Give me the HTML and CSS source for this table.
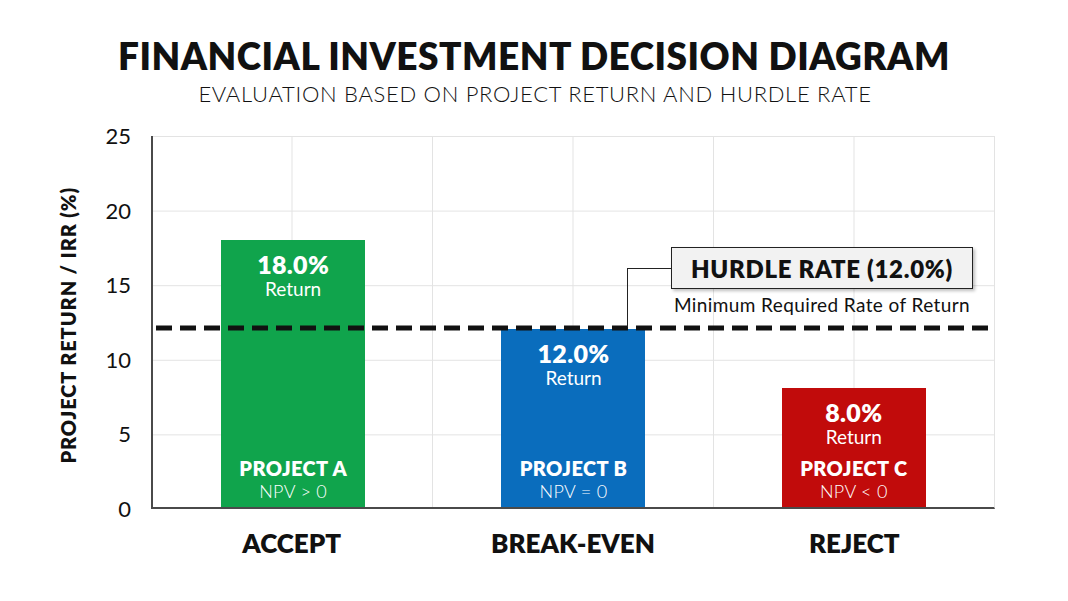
FILE: index.html
```html
<!DOCTYPE html>
<html lang="en">
<head>
<meta charset="utf-8">
<title>Financial Investment Decision Diagram</title>
<link rel="stylesheet" href="styles.css">
</head>
<body>
<header class="header">
  <h1 class="title">FINANCIAL INVESTMENT DECISION DIAGRAM</h1>
  <p class="subtitle">EVALUATION BASED ON PROJECT RETURN AND HURDLE RATE</p>
</header>
<main class="chart">
  <div class="y-title"><span>PROJECT RETURN / IRR (%)</span></div>
  <div class="y-ticks">
    <span>25</span><span>20</span><span>15</span><span>10</span><span>5</span><span>0</span>
  </div>
  <div class="plot">
    <div class="bars">
      <div class="slot">
        <div class="bar bar-green" style="height:72%">
          <div class="bar-top"><span class="value">18.0%</span><span class="value-sub">Return</span></div>
          <div class="bar-bottom"><span class="project">PROJECT A</span><span class="npv">NPV &gt; 0</span></div>
        </div>
      </div>
      <div class="slot">
        <div class="bar bar-blue" style="height:48%">
          <div class="bar-top"><span class="value">12.0%</span><span class="value-sub">Return</span></div>
          <div class="bar-bottom"><span class="project">PROJECT B</span><span class="npv">NPV = 0</span></div>
        </div>
      </div>
      <div class="slot">
        <div class="bar bar-red" style="height:32%">
          <div class="bar-top"><span class="value">8.0%</span><span class="value-sub">Return</span></div>
          <div class="bar-bottom"><span class="project">PROJECT C</span><span class="npv">NPV &lt; 0</span></div>
        </div>
      </div>
    </div>
    <div class="hurdle-line" style="bottom:48.3%"></div>
    <div class="connector"></div>
    <div class="hurdle-label">
      <div class="hurdle-box">HURDLE RATE (12.0%)</div>
      <div class="hurdle-caption">Minimum Required Rate of Return</div>
    </div>
  </div>
  <div class="x-labels">
    <span>ACCEPT</span><span>BREAK-EVEN</span><span>REJECT</span>
  </div>
</main>
</body>
</html>
```
FILE: styles.css
```css
* { box-sizing: border-box; }
html, body { margin: 0; padding: 0; }
body {
  width: 1068px;
  height: 601px;
  background: #ffffff;
  color: #111111;
  font-family: "Lato", "Open Sans", "DejaVu Sans", sans-serif;
  overflow: hidden;
}
.header {
  padding-top: 36px;
  text-align: center;
}
.title {
  margin: 0;
  font-size: 37px;
  line-height: 40px;
  font-weight: 800;
  letter-spacing: 0.5px;
  padding-left: 0;
}
.subtitle {
  margin: 5px 0 0;
  font-size: 22px;
  line-height: 26px;
  font-weight: 300;
  letter-spacing: 0.7px;
  padding-left: 2px;
}
.chart {
  margin-top: 29px;
  margin-left: 48px;
  display: grid;
  grid-template-columns: 40px 63px 844px;
  grid-template-rows: 373px auto;
}
.y-title {
  grid-row: 1;
  grid-column: 1;
  display: flex;
  align-items: center;
  justify-content: center;
  padding-top: 6px;
}
.y-title span {
  writing-mode: vertical-rl;
  transform: rotate(180deg);
  font-size: 20px;
  font-weight: 800;
  letter-spacing: 0.9px;
  white-space: nowrap;
}
.y-ticks {
  grid-row: 1;
  grid-column: 2;
  display: flex;
  flex-direction: column;
  justify-content: space-between;
  align-items: flex-end;
  padding-right: 20px;
  margin: -12px 0;
}
.y-ticks span {
  font-size: 22px;
  line-height: 24px;
  font-weight: 400;
}
.plot {
  grid-row: 1;
  grid-column: 3;
  position: relative;
  border-left: 2px solid #4a4a4a;
  border-bottom: 2px solid #4a4a4a;
  border-right: 1px solid #e3e3e3;
  background-color: #ffffff;
  background-image:
    linear-gradient(to right, #e3e3e3 1px, transparent 1px),
    linear-gradient(to bottom, #e3e3e3 1px, transparent 1px);
  background-size: 140.5px 74.6px;
  background-position: -2px 0;
}
.bars {
  position: absolute;
  inset: 0;
  display: grid;
  grid-template-columns: repeat(3, 1fr);
}
.slot {
  display: flex;
  align-items: flex-end;
  justify-content: center;
}
.bar {
  width: 144px;
  display: flex;
  flex-direction: column;
  justify-content: space-between;
  align-items: center;
  color: #ffffff;
  padding: 10px 0 5px;
  text-align: center;
}
.bar-green { background: #10a44c; }
.bar-blue { background: #0a6dbd; }
.bar-red { background: #c10b0b; }
.bar-top, .bar-bottom {
  display: flex;
  flex-direction: column;
  align-items: center;
}
.value {
  font-size: 25px;
  line-height: 28px;
  font-weight: 800;
  letter-spacing: 0.3px;
}
.value-sub {
  font-size: 19px;
  line-height: 22px;
  font-weight: 400;
}
.project {
  font-size: 20px;
  line-height: 24px;
  font-weight: 800;
  letter-spacing: 0.4px;
}
.npv {
  font-size: 18px;
  line-height: 22px;
  font-weight: 300;
  letter-spacing: 0.3px;
}
.hurdle-line {
  position: absolute;
  left: 3px;
  right: -2px;
  height: 5px;
  transform: translateY(50%);
  background: repeating-linear-gradient(to right, #111111 0 16px, transparent 16px 24px);
}
.connector {
  position: absolute;
  left: 474px;
  top: 132px;
  width: 46px;
  height: 59px;
  border-left: 1.5px solid #222222;
  border-top: 1.5px solid #222222;
}
.hurdle-label {
  position: absolute;
  left: 518px;
  top: 111px;
  width: 302px;
  display: flex;
  flex-direction: column;
  align-items: center;
}
.hurdle-box {
  width: 100%;
  height: 42px;
  background: #f2f2f2;
  border: 1.5px solid #222222;
  box-shadow: 2px 2px 3px rgba(0, 0, 0, 0.25);
  display: flex;
  align-items: center;
  justify-content: center;
  font-size: 24px;
  font-weight: 800;
  letter-spacing: 0.7px;
}
.hurdle-caption {
  margin-top: 5px;
  font-size: 19px;
  line-height: 22px;
  font-weight: 400;
  letter-spacing: 0.4px;
}
.x-labels {
  grid-row: 2;
  grid-column: 3;
  display: grid;
  grid-template-columns: repeat(3, 1fr);
  text-align: center;
  margin-top: 19px;
}
.x-labels span {
  font-size: 26px;
  line-height: 30px;
  font-weight: 800;
}
```
